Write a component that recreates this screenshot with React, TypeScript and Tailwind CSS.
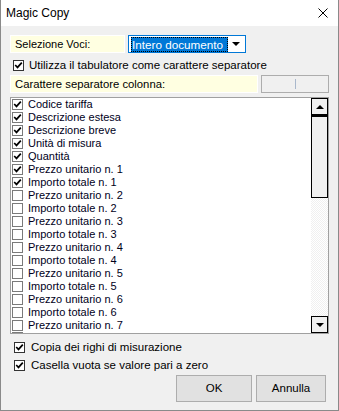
import React from 'react';

const ITEMS: { label: string; checked: boolean }[] = [
  { label: 'Codice tariffa', checked: true },
  { label: 'Descrizione estesa', checked: true },
  { label: 'Descrizione breve', checked: true },
  { label: 'Unità di misura', checked: true },
  { label: 'Quantità', checked: true },
  { label: 'Prezzo unitario n. 1', checked: true },
  { label: 'Importo totale n. 1', checked: true },
  { label: 'Prezzo unitario n. 2', checked: false },
  { label: 'Importo totale n. 2', checked: false },
  { label: 'Prezzo unitario n. 3', checked: false },
  { label: 'Importo totale n. 3', checked: false },
  { label: 'Prezzo unitario n. 4', checked: false },
  { label: 'Importo totale n. 4', checked: false },
  { label: 'Prezzo unitario n. 5', checked: false },
  { label: 'Importo totale n. 5', checked: false },
  { label: 'Prezzo unitario n. 6', checked: false },
  { label: 'Importo totale n. 6', checked: false },
  { label: 'Prezzo unitario n. 7', checked: false },
];

function Check({ checked, dark }: { checked: boolean; dark?: boolean }) {
  return (
    <span
      className={`flex h-[11px] w-[11px] shrink-0 items-center justify-center bg-white border ${dark ? 'border-[#333]' : 'border-[#7a7a7a]'}`}
    >
      {checked && (
        <svg width="9" height="9" viewBox="0 0 9 9">
          <path d="M1.2 4 L3.5 6.4 L7.8 1.6" fill="none" stroke="#000" strokeWidth="1.7" />
        </svg>
      )}
    </span>
  );
}

export default function App() {
  return (
    <div className="w-[339px] h-[411px] bg-[#f0f0f0] border border-[#8a8a8a] border-t-0 flex flex-col text-[11.5px] text-black font-['Liberation_Sans',sans-serif] overflow-hidden">
      {/* Title bar */}
      <div className="h-[26px] bg-white flex items-center justify-between pl-[5px] pr-[10px]">
        <span className="text-[12px]">Magic Copy</span>
        <svg width="10" height="10" viewBox="0 0 10 10">
          <path d="M0.5 0.5 L9.5 9.5 M9.5 0.5 L0.5 9.5" stroke="#000" strokeWidth="1" />
        </svg>
      </div>

      <div className="flex flex-col px-[9px] pt-[9px]">
        {/* Selezione voci */}
        <div className="flex h-[18px] gap-[3px]">
          <div className="w-[115px] bg-[#ffffe1] border border-white flex items-center pl-[4px] text-[11px]">Selezione Voci:</div>
          <div className="w-[118px] bg-white border border-[#0078d7] flex items-center pl-[2px]">
            <span className="bg-[#0078d7] text-white pl-[1px] h-[15px] leading-[15px] w-[97px] outline-1 outline-dotted outline-[#000] -outline-offset-1 text-[11.7px]">Intero documento</span>
            <span className="ml-auto mr-[5px] w-0 h-0 border-l-[4px] border-r-[4px] border-t-[4px] border-l-transparent border-r-transparent border-t-black" />
          </div>
        </div>

        {/* Tab separator checkbox */}
        <div className="flex items-center gap-[5px] h-[14px] mt-[5px] pl-[3px]">
          <Check checked dark />
          <span className="leading-[14px]">Utilizza il tabulatore come carattere separatore</span>
        </div>

        {/* Separatore colonna */}
        <div className="flex h-[18px] gap-[3px] mt-[3px]">
          <div className="w-[248px] bg-[#ffffe1] border border-white flex items-center pl-[4px] text-[11.3px]">Carattere separatore colonna:</div>
          <div className="w-[68px] bg-[#f0f0f0] border border-[#adadad] flex items-center justify-center">
            <span className="w-[1px] h-[10px] bg-[#a9b8cc]" />
          </div>
        </div>

        {/* List */}
        <div className="flex h-[237px] mt-[4px] bg-white border border-[#a0a0a0] overflow-hidden text-[11px]">
          <div className="flex-1 flex flex-col pl-[1px] overflow-hidden">
            {ITEMS.map((it) => (
              <div key={it.label} className="flex items-center gap-[5px] h-[13px] shrink-0">
                <Check checked={it.checked} />
                <span className="leading-[13px] text-[#00001a]">{it.label}</span>
              </div>
            ))}
            <div className="flex h-[13px] shrink-0">
              <span className="h-[11px] w-[11px] border border-[#7a7a7a]" />
            </div>
          </div>
          {/* Scrollbar */}
          <div className="w-[17px] flex flex-col bg-[repeating-conic-gradient(#f0f0f0_0_25%,#ffffff_0_50%)] bg-[length:2px_2px]">
            <div className="h-[17px] bg-[#f0f0f0] border border-black flex items-center justify-center">
              <span className="w-0 h-0 border-l-[4px] border-r-[4px] border-b-[4px] border-l-transparent border-r-transparent border-b-black" />
            </div>
            <div className="h-[83px] bg-[#f0f0f0] border border-black border-t-2" />
            <div className="flex-1" />
            <div className="h-[17px] bg-[#f0f0f0] border border-black flex items-center justify-center">
              <span className="w-0 h-0 border-l-[4px] border-r-[4px] border-t-[4px] border-l-transparent border-r-transparent border-t-black" />
            </div>
          </div>
        </div>

        {/* Bottom options */}
        <div className="flex items-center gap-[6px] h-[14px] mt-[6px] pl-[4px]">
          <Check checked dark />
          <span className="leading-[14px]">Copia dei righi di misurazione</span>
        </div>
        <div className="flex items-center gap-[6px] h-[14px] mt-[4px] pl-[4px]">
          <Check checked dark />
          <span className="leading-[14px]">Casella vuota se valore pari a zero</span>
        </div>

        {/* Buttons */}
        <div className="flex justify-end gap-[4px] mt-[3px] pr-[3px]">
          <button className="w-[76px] h-[27px] bg-[#e1e1e1] border border-[#adadad] text-[11.5px]">OK</button>
          <button className="w-[70px] h-[27px] bg-[#e1e1e1] border border-[#adadad] text-[11.5px]">Annulla</button>
        </div>
      </div>
    </div>
  );
}
